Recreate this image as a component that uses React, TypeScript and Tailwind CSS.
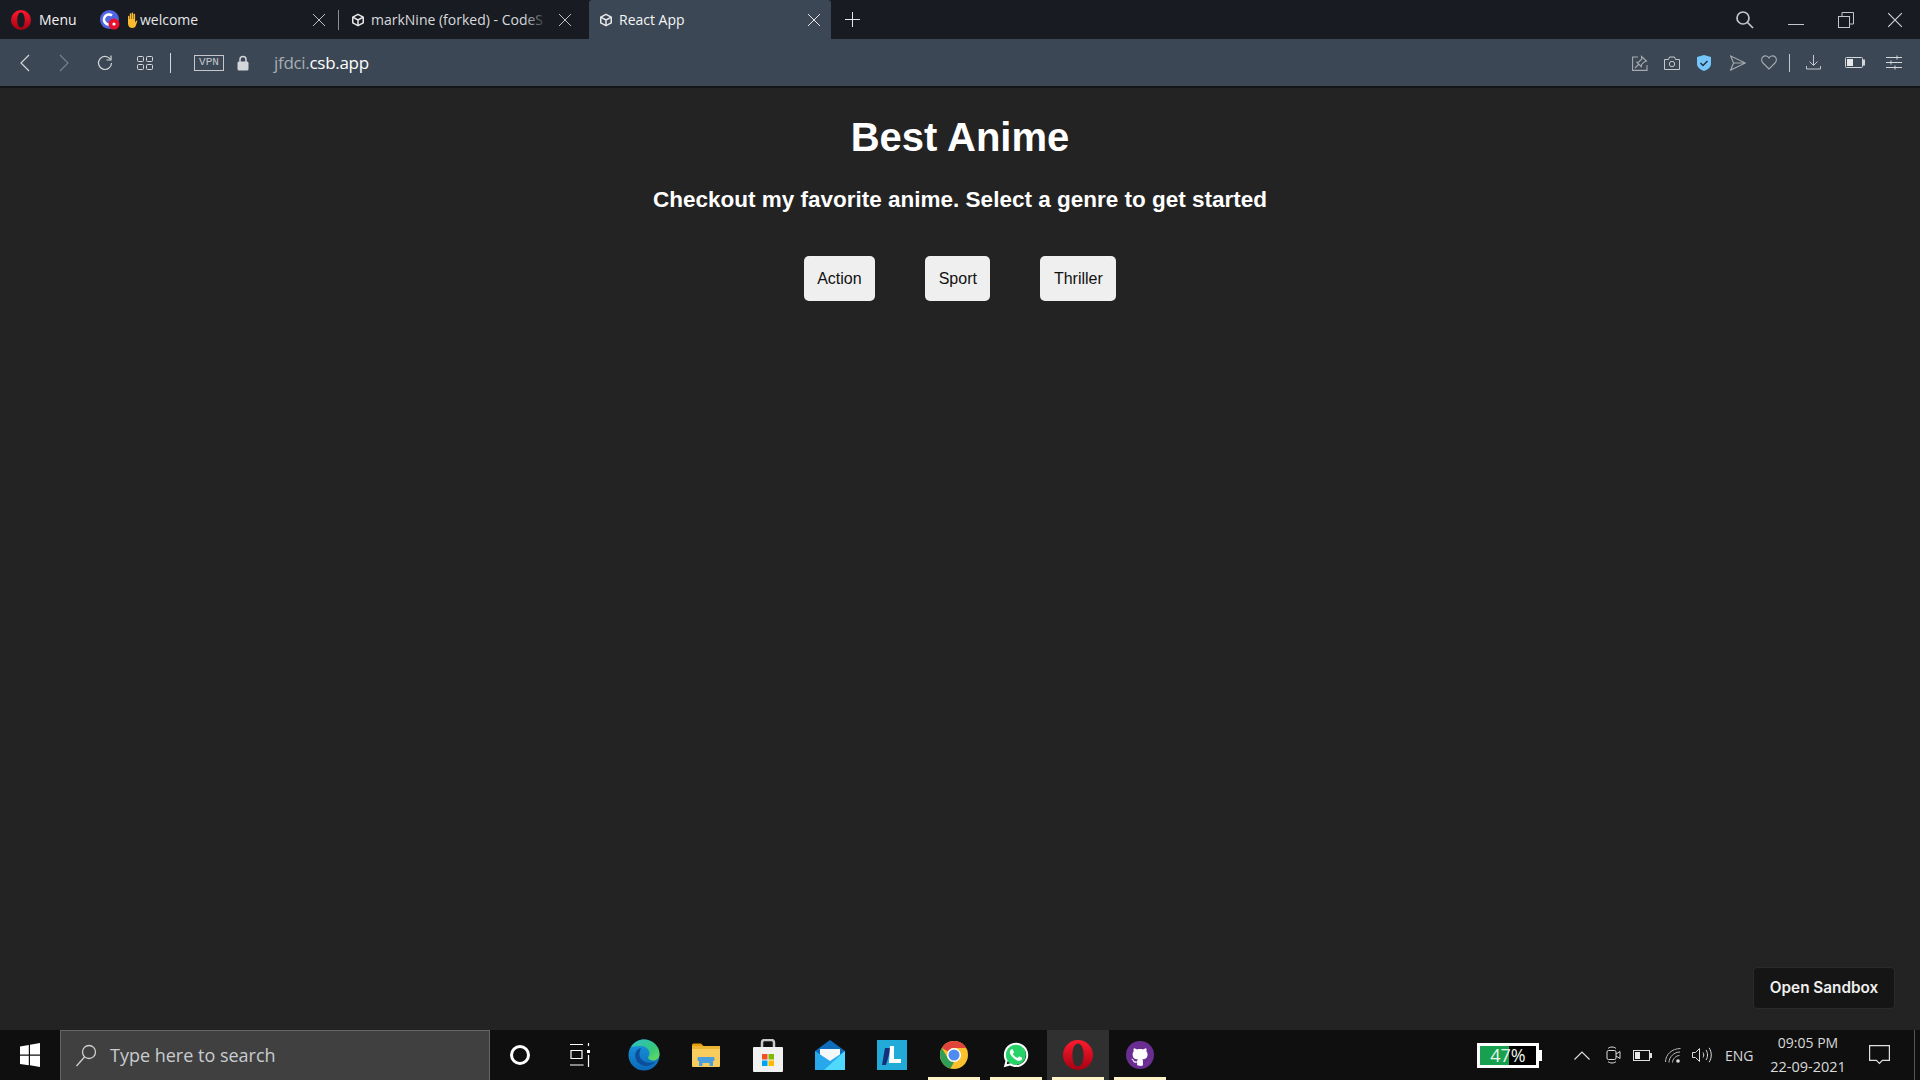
import React from "react";
import { FaWhatsapp, FaGithub } from "react-icons/fa";

const ui = "font-['Open_Sans',sans-serif]";

function Cube({ className = "" }: { className?: string }) {
  return (
    <svg viewBox="0 0 16 16" className={`h-[14px] w-[14px] ${className}`} fill="none" stroke="#e8e8e8" strokeWidth="1.7" strokeLinejoin="round">
      <path d="M8 1.5 14 4.8v6.4L8 14.5 2 11.2V4.8z" />
      <path d="M2 4.8 8 8l6-3.2M8 8v6.5" />
    </svg>
  );
}

function Close({ size = 14, color = "#bfc3c7" }: { size?: number; color?: string }) {
  return (
    <svg width={size} height={size} viewBox="0 0 14 14" stroke={color} strokeWidth="1" fill="none">
      <path d="M1 1l12 12M13 1 1 13" />
    </svg>
  );
}

function Opera({ size = 20 }: { size?: number }) {
  return (
    <svg width={size} height={size} viewBox="0 0 30 30">
      <defs>
        <linearGradient id={`op${size}`} x1="0" y1="0" x2="0" y2="1">
          <stop offset="0" stopColor="#ff1b2d" />
          <stop offset="1" stopColor="#a70014" />
        </linearGradient>
      </defs>
      <path fillRule="evenodd" fill={`url(#op${size})`} d="M15 0a15 15 0 1 0 0 30a15 15 0 1 0 0-30zM15 3.6c-3.6 0-5.6 5-5.6 11.4s2 11.4 5.6 11.4s5.6-5 5.6-11.4s-2-11.4-5.6-11.4z" />
    </svg>
  );
}

function WelcomeIcon() {
  return (
    <svg width="20" height="20" viewBox="0 0 20 20">
      <circle cx="9.5" cy="9.5" r="9.5" fill="#5065e0" />
      <path d="M12 5.5a5 5 0 1 0 0 8" fill="none" stroke="#fff" strokeWidth="2.6" />
      <circle cx="14" cy="14" r="5.5" fill="#e8112d" />
      <circle cx="14" cy="14" r="1.6" fill="#fff" />
    </svg>
  );
}

function Hand() {
  return (
    <svg width="12" height="16" viewBox="0 0 12 16" fill="#fbb930">
      <path d="M2 4.5c0-1 1.4-1 1.4 0V7h.4V2c0-1 1.5-1 1.5 0v5h.4V1.3c0-1 1.5-1 1.5 0V7h.4V2.4c0-1 1.5-1 1.5 0V10c0 .4.2.3.4 0l.5-1c.5-1 1.6-.5 1.2.5L9.700 14c-.6 1.300-1.600 2-3.200 2-2.500 0-4.500-1.500-4.500-4.500z" />
    </svg>
  );
}

function Edge() {
  return (
    <svg width="32" height="32" viewBox="0 0 32 32">
      <defs>
        <linearGradient id="e1" x1="0" y1="0" x2="1" y2="1">
          <stop offset="0" stopColor="#2fc1c8" />
          <stop offset="0.6" stopColor="#34c77b" />
          <stop offset="1" stopColor="#6fdc5e" />
        </linearGradient>
        <linearGradient id="e2" x1="0" y1="0" x2="0" y2="1">
          <stop offset="0" stopColor="#1a97e0" />
          <stop offset="1" stopColor="#0c6ab8" />
        </linearGradient>
      </defs>
      <circle cx="16" cy="16" r="15.500" fill="url(#e2)" />
      <path d="M3 8C6 3 11 .5 16 .5c8.500 0 15.500 6.500 15.500 14.500 0 4-3 6.500-6.500 6.500-3 0-5-1.500-5-3 0-.8 1.500-1.500 1.500-4 0-4-4-7.500-8.500-7.500C8 7 4 8 3 8z" fill="url(#e1)" />
      <path d="M13 9c-5 1-6.500 6-5.500 10 1 4.500 6 8.500 12 8 3-.3 6-2 8-4.500-3 1.500-8 2-11.500 0-3-1.800-5-5-4.500-8 .2-2 1-4 1.500-5.500z" fill="#0b4f9c" />
    </svg>
  );
}

function Folder() {
  return (
    <svg width="28" height="25" viewBox="0 0 28 25">
      <path d="M0 2a1.500 1.500 0 0 1 1.500-1.500H9l3 3h-12z" fill="#e3a008" />
      <rect x="0" y="3" width="28" height="21" rx="1" fill="#f8cd5d" />
      <rect x="0" y="3" width="28" height="3" fill="#eeb534" />
      <path d="M7 23v-6h14v6h-3.500v-3h-7v3z" fill="#4a9fdc" />
      <rect x="5.500" y="14" width="17" height="4" rx="1" fill="#4a9fdc" />
    </svg>
  );
}

function Store() {
  return (
    <svg width="30" height="33" viewBox="0 0 30 33">
      <path d="M9 9V3.500A2.500 2.500 0 0 1 11.500 1h7A2.500 2.500 0 0 1 21 3.500V9" fill="none" stroke="#c9c9c9" strokeWidth="2.500" />
      <rect x="0" y="8" width="30" height="25" rx="1" fill="#f1f1f1" />
      <rect x="9" y="15" width="5.500" height="5.500" fill="#f25022" />
      <rect x="15.500" y="15" width="5.500" height="5.500" fill="#7fba00" />
      <rect x="9" y="21.500" width="5.500" height="5.500" fill="#00a4ef" />
      <rect x="15.500" y="21.500" width="5.500" height="5.500" fill="#ffb900" />
    </svg>
  );
}

function Mail() {
  return (
    <svg width="30" height="30" viewBox="0 0 30 30">
      <path d="M0 11 15 0l15 11v19H0z" fill="#0f6cbd" />
      <path d="M5 9h20v9l-10 5-10-5z" fill="#f4f8fb" />
      <path d="M0 11l15 10 15-10v19H0z" fill="#28a8ea" />
      <path d="M30 11v19H9z" fill="#50d9ff" />
    </svg>
  );
}

function LIcon() {
  return (
    <div className="relative flex h-[30px] w-[30px] items-center justify-center bg-[#22abd8]">
      <svg width="30" height="30" viewBox="0 0 30 30">
        <path d="M8 8h6l-5 17H5z" fill="#14307c" />
        <path d="M13 6h4v13h7v4H12z" fill="#fff" />
      </svg>
    </div>
  );
}

function Chrome() {
  return (
    <svg width="28" height="28" viewBox="0 0 48 48">
      <circle cx="24" cy="24" r="24" fill="#fbc02d" />
      <path d="M24 0a24 24 0 0 1 20.800 12H24a12 12 0 0 0-10.400 6L3.200 12A24 24 0 0 1 24 0z" fill="#e0433a" />
      <path d="M3.200 12 13.600 30a12 12 0 0 0 10.400 6l-6 11.300A24 24 0 0 1 0 24c0-4.400 1.200-8.500 3.200-12z" fill="#2f9e57" />
      <circle cx="24" cy="24" r="12" fill="#fff" />
      <circle cx="24" cy="24" r="9.500" fill="#4f8cf0" />
    </svg>
  );
}

function Whatsapp() {
  return (
    <div className="relative flex h-[28px] w-[28px] items-center justify-center">
      <div className="absolute left-[3px] top-[3px] h-[21px] w-[21px] rounded-full bg-[#25d366]" />
      <FaWhatsapp size={28} color="#ffffff" className="relative" />
    </div>
  );
}

function Github() {
  return (
    <div className="relative flex h-[28px] w-[28px] items-center justify-center rounded-full bg-[#6a2d91]">
      <div className="absolute h-[21px] w-[21px] rounded-full bg-white" />
      <FaGithub size={24} color="#6a2d91" className="relative" />
    </div>
  );
}

function Stroke({ w, h, vb, d, color = "#c9ccd0", sw = 1.2 }: { w: number; h: number; vb?: string; d: string; color?: string; sw?: number }) {
  return (
    <svg width={w} height={h} viewBox={vb ?? `0 0 ${w} ${h}`} fill="none" stroke={color} strokeWidth={sw}>
      <path d={d} />
    </svg>
  );
}

function TabStrip() {
  return (
    <div className={`flex h-[39px] shrink-0 items-stretch bg-[#181c22] text-[14px] text-white ${ui}`}>
      <div className="flex w-[90px] items-center pl-[11px]">
        <Opera size={20} />
        <span className="ml-[8px] text-[#f2f2f2]">Menu</span>
      </div>
      <div className="flex w-[249px] items-center pl-[10px]">
        <WelcomeIcon />
        <span className="ml-[6px]"><Hand /></span>
        <span className="ml-[2px] text-[#e4e6e8]">welcome</span>
        <span className="ml-auto mr-[12px]"><Close /></span>
        <span className="h-[20px] w-px bg-[#8b8f94]" />
      </div>
      <div className="flex w-[250px] items-center pl-[12px]">
        <Cube />
        <div className="relative ml-[6px] w-[177px] whitespace-nowrap text-[#d8dadd]">
          markNine (forked) - CodeS
          <div className="absolute inset-y-0 right-0 w-[24px] bg-gradient-to-r from-transparent to-[#181c22]" />
        </div>
        <span className="ml-[10px]"><Close /></span>
      </div>
      <div className="flex w-[242px] items-center rounded-t-[3px] bg-[#3b4754] pl-[10px]">
        <Cube />
        <span className="ml-[6px] text-[#f5f6f7]">React App</span>
        <span className="ml-auto mr-[10px]"><Close color="#e6e8ea" /></span>
      </div>
      <div className="flex items-center pl-[14px]">
        <Stroke w={15} h={15} color="#e6e8ea" sw={1} d="M7.500 0v15M0 7.500h15" />
      </div>
      <div className="ml-auto flex items-center">
        <svg width="20" height="20" viewBox="0 0 20 20" fill="none" stroke="#c4c6c9" strokeWidth="1.700" className="mr-[33px]">
          <circle cx="8" cy="8" r="6" />
          <path d="M12.500 12.500 18 18" />
        </svg>
        <div className="mr-[34px] mt-[9px] h-px w-[16px] bg-[#c4c6c9]" />
        <svg width="16" height="16" viewBox="0 0 16 16" fill="none" stroke="#c4c6c9" strokeWidth="1" className="mr-[33px]">
          <rect x="0.500" y="4.500" width="11" height="11" />
          <path d="M4 4V.5h11.500V12H12" />
        </svg>
        <span className="mr-[17px]"><Close size={16} color="#d0d2d5" /></span>
      </div>
    </div>
  );
}

function Toolbar() {
  return (
    <div className={`flex h-[49px] shrink-0 items-center border-b-[2px] border-[#121416] bg-[#3b4754] ${ui}`}>
      <span className="ml-[20px]"><Stroke w={10} h={18} color="#d4d7da" d="M9 1 1 9l8 8" /></span>
      <span className="ml-[29px]"><Stroke w={10} h={18} color="#79828c" d="M1 1l8 8-8 8" /></span>
      <svg width="16" height="16" viewBox="0 0 16 16" fill="none" stroke="#d4d7da" strokeWidth="1.200" className="ml-[28px]">
        <path d="M13.500 4.500A6.500 6.500 0 1 0 14.500 8" />
        <path d="M14 .5v4.500H9.500" />
      </svg>
      <svg width="16" height="16" viewBox="0 0 16 16" fill="none" stroke="#d4d7da" strokeWidth="1" className="ml-[24px]">
        <rect x="0.500" y="1.500" width="6" height="5" rx="1" />
        <rect x="9.500" y="1.500" width="6" height="5" rx="1" />
        <rect x="0.500" y="9.500" width="6" height="5" rx="1" />
        <rect x="9.500" y="9.500" width="6" height="5" rx="1" />
      </svg>
      <div className="ml-[17px] h-[20px] w-px bg-[#d4d7da]" />
      <div className="ml-[23px] flex h-[16px] w-[30px] items-center justify-center border border-[#c4c8cc] font-['Liberation_Mono',monospace] text-[11px] leading-none text-[#c4c8cc]">VPN</div>
      <svg width="12" height="16" viewBox="0 0 12 16" className="ml-[13px]">
        <path d="M3 7V4.500a3 3 0 0 1 6 0V7" fill="none" stroke="#d4d7da" strokeWidth="1.500" />
        <rect x="0.500" y="6.500" width="11" height="9" rx="1.500" fill="#d4d7da" />
      </svg>
      <div className="ml-[25px] text-[17px] tracking-[-0.3px]">
        <span className="text-[#a7aeb5]">jfdci.</span>
        <span className="text-white">csb.app</span>
      </div>
      <div className="ml-auto flex items-center">
        <svg width="16" height="16" viewBox="0 0 16 16" fill="none" stroke="#a6abb0" strokeWidth="1.100" className="mr-[16px]">
          <path d="M6 2H.6v13.400H15V10" />
          <path d="M9.500 1.500 14.500 6l-2 .7-3 3-.2 2-4.500-4.500 2-.2 3-3zM6.500 9.500 3 13" />
        </svg>
        <svg width="16" height="14" viewBox="0 0 16 14" fill="none" stroke="#c4c8cc" strokeWidth="1" className="mr-[17px]">
          <path d="M.5 3.500h4l1-2.500h5l1 2.500h4v10h-15z" />
          <circle cx="8" cy="8" r="2.700" />
        </svg>
        <svg width="14" height="16" viewBox="0 0 14 16" className="mr-[19px]">
          <path d="M7 0 14 2v7c0 3.500-4 6-7 7-3-1-7-3.500-7-7V2z" fill="#74c6fb" />
          <path d="M3.500 8 6 10.500 10.500 6" fill="none" stroke="#27323c" strokeWidth="1.500" />
        </svg>
        <svg width="16" height="16" viewBox="0 0 16 16" fill="none" stroke="#a6abb0" strokeWidth="1.100" className="mr-[15px]">
          <path d="M.6 1 15.500 8 .6 15l3-7zM3.600 8h12" />
        </svg>
        <svg width="16" height="15" viewBox="0 0 16 15" fill="none" stroke="#a6abb0" strokeWidth="1.100" className="mr-[12px]">
          <path d="M8 14 2 8C0 6 .3 3 2 1.700 4 .2 6.800.8 8 3c1.200-2.200 4-2.800 6-1.300C15.700 3 16 6 14 8z" />
        </svg>
        <div className="mr-[16px] h-[18px] w-px bg-[#c4c8cc]" />
        <svg width="15" height="15" viewBox="0 0 15 15" fill="none" stroke="#c4c8cc" strokeWidth="1" className="mr-[24px]">
          <path d="M7.500 0v10M3.500 6.500l4 4 4-4M.5 11v3h14v-3" />
        </svg>
        <svg width="20" height="11" viewBox="0 0 20 11" className="mr-[21px]">
          <rect x="0.500" y="0.500" width="17" height="10" rx="1" fill="none" stroke="#d4d7da" />
          <rect x="2" y="2" width="6" height="7" fill="#e6e8ea" />
          <rect x="18" y="2.500" width="2" height="6" fill="#d4d7da" />
        </svg>
        <svg width="16" height="15" viewBox="0 0 16 15" fill="none" stroke="#d4d7da" strokeWidth="1" className="mr-[18px]">
          <path d="M0 2.500h16M0 7.500h16M0 12.500h16M11 .5v4M5 5.500v4M9 10.500v4" />
        </svg>
      </div>
    </div>
  );
}

function Genre({ label }: { label: string }) {
  return (
    <button className="h-[45px] rounded-[5px] bg-[#efefef] px-[13.5px] text-[16px] text-[#111]">{label}</button>
  );
}

function Content() {
  return (
    <main className="relative flex min-h-0 flex-1 flex-col items-center bg-[#232323] font-['Liberation_Sans',sans-serif] text-white">
      <h1 className="mt-[26px] text-[40px] font-bold leading-[46px]">Best Anime</h1>
      <p className="mt-[26px] text-[22.5px] font-bold leading-[28px]">Checkout my favorite anime. Select a genre to get started</p>
      <div className="mt-[42px] flex gap-[50px]">
        <Genre label="Action" />
        <Genre label="Sport" />
        <Genre label="Thriller" />
      </div>
      <div className="absolute bottom-[21px] right-[25px] flex h-[42px] w-[142px] items-center justify-center rounded-[4px] border border-[#2a2a2a] bg-[#151515] font-['Inter',sans-serif] text-[15.3px] font-semibold text-[#f0f0f0]">
        Open Sandbox
      </div>
    </main>
  );
}

function TaskCell({ children, bar, active }: { children: React.ReactNode; bar?: boolean; active?: boolean }) {
  return (
    <div className={`relative flex h-full w-[62px] items-center justify-center ${active ? "bg-[#303030]" : ""}`}>
      {children}
      {bar && <div className="absolute bottom-0 left-[5px] right-[5px] h-[3px] bg-[#fff4c9]" />}
    </div>
  );
}

function Taskbar() {
  return (
    <footer className={`flex h-[50px] shrink-0 items-center bg-[#0f0f0f] text-[#d9d9d9] ${ui}`}>
      <div className="flex h-full w-[60px] items-center justify-center">
        <svg width="20" height="24" viewBox="0 0 20 24" fill="#fff">
          <path d="M0 3.500 8.800 2v9.500H0zM10 1.800 20 0v11.500H10zM0 12.700h8.800v9.500L0 21zM10 12.700h10V24l-10-1.800z" />
        </svg>
      </div>
      <div className="flex h-full w-[430px] items-center border border-b-0 border-[#666] bg-[#404040] pl-[14px]">
        <svg width="22" height="24" viewBox="0 0 22 24" fill="none" stroke="#d0d0d0" strokeWidth="1.300">
          <circle cx="14" cy="8" r="6.500" />
          <path d="M9.500 13 1.500 22" />
        </svg>
        <span className="ml-[13px] text-[18px] text-[#c8ccd0]">Type here to search</span>
      </div>
      <div className="flex h-full w-[60px] items-center justify-center">
        <div className="h-[20px] w-[20px] rounded-full border-[3px] border-white" />
      </div>
      <div className="flex h-full w-[60px] items-center justify-center">
        <svg width="20" height="24" viewBox="0 0 20 24" fill="none" stroke="#fff" strokeWidth="1.200">
          <path d="M0 1.500h13M1 7.500h11v8H1zM0 22.500v-.5h13v.5M18.500 0v3M18.500 12v12" />
          <rect x="17" y="7" width="3" height="3" fill="#fff" stroke="none" />
        </svg>
      </div>
      <div className="ml-[3px] flex h-full items-center">
        <TaskCell><Edge /></TaskCell>
        <TaskCell><Folder /></TaskCell>
        <TaskCell><Store /></TaskCell>
        <TaskCell><Mail /></TaskCell>
        <TaskCell><LIcon /></TaskCell>
        <TaskCell bar><Chrome /></TaskCell>
        <TaskCell bar><Whatsapp /></TaskCell>
        <TaskCell bar active><Opera size={30} /></TaskCell>
        <TaskCell bar><Github /></TaskCell>
      </div>
      <div className="ml-auto flex h-full items-center">
        <div className="flex items-center">
          <div className="relative flex h-[25px] w-[62px] items-center justify-center border-[3px] border-white bg-black text-[18px] leading-none text-[#e8f5ec]">
            <div className="absolute inset-y-0 left-0 w-[29px] bg-[#17a14f]" />
            <span className="relative">47%</span>
          </div>
          <div className="h-[11px] w-[3px] bg-white" />
        </div>
        <svg width="16" height="9" viewBox="0 0 16 9" fill="none" stroke="#dcdcdc" strokeWidth="1.200" className="ml-[32px]">
          <path d="M.5 8.500 8 1l7.500 7.500" />
        </svg>
        <svg width="15" height="18" viewBox="0 0 15 18" fill="none" stroke="#dcdcdc" strokeWidth="1" className="ml-[16px]">
          <rect x="1" y="4.500" width="9" height="9" rx="1.500" />
          <path d="M10 8l4-2.500v7L10 10M2 2.500C4 .5 8 .5 10 2.500M2 15.500c2 2 6 2 8 0" />
        </svg>
        <svg width="19" height="11" viewBox="0 0 19 11" className="ml-[12px]">
          <rect x="0.500" y="0.500" width="16" height="10" fill="none" stroke="#e0e0e0" />
          <rect x="2" y="2" width="5" height="7" fill="#e8e8e8" />
          <rect x="17" y="3" width="2" height="5" fill="#e0e0e0" />
        </svg>
        <svg width="16" height="15" viewBox="0 0 16 15" fill="none" stroke="#b8b8b8" strokeWidth="1" className="ml-[13px]">
          <path d="M.5 14C.5 6.500 7 .5 15.500.5M4 14.500C4 9 9 4 15 4M7.500 14.500c0-3.500 3.500-7 7-7" />
          <circle cx="13" cy="13" r="1.800" fill="#e0e0e0" stroke="none" />
        </svg>
        <svg width="20" height="16" viewBox="0 0 20 16" fill="none" stroke="#dcdcdc" strokeWidth="1" className="ml-[11px]">
          <path d="M.5 5.500h3l4-4v13l-4-4h-3zM11 5.500c1 1.500 1 3.500 0 5M14 3c2 3 2 7 0 10M17 .8c3 4 3 10.400 0 14.400" />
        </svg>
        <span className="ml-[13px] w-[28px] text-center text-[14px]">ENG</span>
        <div className="ml-[16px] flex w-[78px] flex-col items-center text-[14px] leading-[24px]">
          <span>09:05 PM</span>
          <span className="text-[14.5px]">22-09-2021</span>
        </div>
        <svg width="21" height="20" viewBox="0 0 21 20" fill="none" stroke="#e0e0e0" strokeWidth="1.200" className="ml-[22px]">
          <path d="M.6.6h19.800v14.800h-7l-3 3-3-3H.6z" />
        </svg>
        <div className="ml-[24px] mr-[5px] h-full w-px bg-[#555]" />
      </div>
    </footer>
  );
}

export default function App() {
  return (
    <div className="flex h-[1080px] w-[1920px] flex-col overflow-hidden">
      <TabStrip />
      <Toolbar />
      <Content />
      <Taskbar />
    </div>
  );
}
